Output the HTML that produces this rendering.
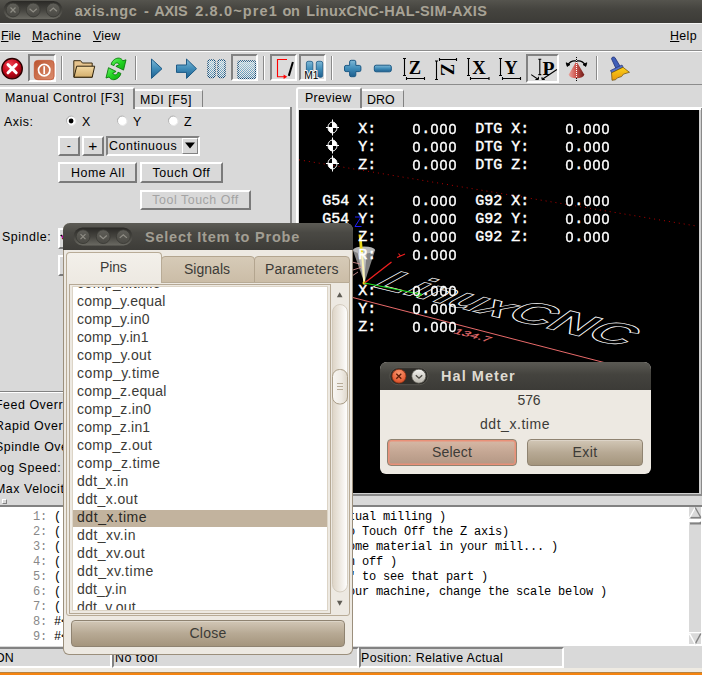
<!DOCTYPE html>
<html><head><meta charset="utf-8">
<style>
*{box-sizing:border-box;margin:0;padding:0}
html,body{width:702px;height:675px;overflow:hidden;background:#d9d9d9}
body{position:relative;font-family:"Liberation Sans",sans-serif;font-size:13.5px;color:#000}
.a{position:absolute;white-space:nowrap}
.t{position:absolute;white-space:nowrap;line-height:16px;height:16px}
u{text-decoration:underline;text-underline-offset:1px}
/* tk raised / sunken */
.rs{border:2px solid;border-color:#fff #828282 #828282 #fff;background:#d9d9d9}
.sk{border:2px solid;border-color:#828282 #fff #fff #828282}
.tkb{position:absolute;border:2px solid;border-color:#fff #7a7a7a #7a7a7a #fff;background:#d9d9d9;text-align:center;white-space:nowrap}
/* title bars */
.tb{position:absolute;background:linear-gradient(#504f4a,#3e3d39 60%,#3c3b37);}
.tbt{position:absolute;font-weight:bold;color:#bdb8ab;white-space:nowrap;font-size:14px}
#dro i{display:inline-block;width:9px;height:16px;text-align:center;font-style:normal;font-family:"Liberation Sans",sans-serif;font-size:15.500px;-webkit-text-stroke:.4px #fff;line-height:16px;vertical-align:top;transform:scaleX(.92)}
</style></head><body>

<!-- MAIN TITLE BAR -->
<div class="tb" id="mtb" style="left:0;top:0;width:702px;height:23px;background:linear-gradient(#55544e,#45443f 40%,#3c3b37)"></div>
<div class="a" style="left:0;top:23px;width:702px;height:1px;background:#f4f4f4"></div>
<svg class="a" style="left:0;top:0" width="70" height="23" viewBox="0 0 70 23">
<defs><linearGradient id="gPill" x1="0" y1="0" x2="0" y2="1"><stop offset="0" stop-color="#2a2926"/><stop offset="0.5" stop-color="#45443f"/><stop offset="1" stop-color="#6b6a63"/></linearGradient>
<linearGradient id="gBt" x1="0" y1="0" x2="0" y2="1"><stop offset="0" stop-color="#605f59"/><stop offset="1" stop-color="#4a4944"/></linearGradient></defs>
<rect x="3.500" y="1" width="59" height="18" rx="9" fill="url(#gPill)"/>
<g fill="url(#gBt)" stroke="#393834" stroke-width="0.800"><circle cx="13" cy="10" r="6.900"/><circle cx="33.200" cy="10" r="6.900"/><circle cx="53.300" cy="10" r="6.900"/></g>
<g stroke="#8f8d85" stroke-width="1.200" fill="none"><path d="M10.500 7.500l5 5M15.500 7.500l-5 5"/><path d="M29.600 8.800l3.600 3.200l3.600-3.200"/><path d="M49.700 11.200l3.600-3.200l3.600 3.200"/></g>
</svg>
<div class="tbt" id="mtt" style="left:75px;top:2px;height:18px;width:420px;line-height:18px;font-size:14.500px;color:#a8a396"><span class="a" style="left:-0.3px;top:0;letter-spacing:0.58px">axis.ngc</span><span class="a" style="left:69.0px;top:0;letter-spacing:0.00px">-</span><span class="a" style="left:79.2px;top:0;letter-spacing:-0.15px">AXIS</span><span class="a" style="left:120.2px;top:0;letter-spacing:1.14px">2.8.0~pre1</span><span class="a" style="left:207.6px;top:0;letter-spacing:-0.41px">on</span><span class="a" style="left:231.3px;top:0;letter-spacing:0.33px">LinuxCNC-HAL-SIM-AXIS</span></div>

<!-- MENU -->
<div class="t" style="left:1px;top:28px;font-size:12.400px;letter-spacing:-.1px"><u>F</u>ile</div>
<div class="t" style="left:32px;top:28px;font-size:12.400px;letter-spacing:.38px"><u>M</u>achine</div>
<div class="t" style="left:93px;top:28px;font-size:12.400px;letter-spacing:.19px"><u>V</u>iew</div>
<div class="t" style="left:670px;top:28px;font-size:12.400px;letter-spacing:.37px"><u>H</u>elp</div>

<!-- TOOLBAR -->
<div class="a" style="left:0;top:50px;width:702px;height:1px;background:#8c8c8c"></div>
<div class="a" style="left:0;top:51px;width:702px;height:1px;background:#fff"></div>
<div class="a" style="left:0;top:84px;width:702px;height:1px;background:#8c8c8c"></div>

<div id="toolbar"><svg class="a" style="left:0;top:0" width="702" height="90" viewBox="0 0 702 90">
<defs>
<radialGradient id="gRed" cx="0.4" cy="0.3" r="0.75"><stop offset="0" stop-color="#f04050"/><stop offset="0.55" stop-color="#c80a1c"/><stop offset="1" stop-color="#7a0008"/></radialGradient>
<linearGradient id="gBlue" x1="0" y1="0" x2="0" y2="1"><stop offset="0" stop-color="#7fb8d6"/><stop offset="0.5" stop-color="#3f8cb8"/><stop offset="1" stop-color="#1f5f8e"/></linearGradient>
<linearGradient id="gGrn" x1="0" y1="0" x2="1" y2="1"><stop offset="0" stop-color="#6cf56c"/><stop offset="0.5" stop-color="#22d422"/><stop offset="1" stop-color="#0fa80f"/></linearGradient>
<linearGradient id="gFold" x1="0" y1="0" x2="0" y2="1"><stop offset="0" stop-color="#f3d9a4"/><stop offset="1" stop-color="#d3ae6c"/></linearGradient>
<linearGradient id="gPow" x1="0" y1="0" x2="1" y2="1"><stop offset="0" stop-color="#b9532f"/><stop offset="0.5" stop-color="#cd7350"/><stop offset="1" stop-color="#d98e70"/></linearGradient>
<linearGradient id="gCone" x1="0" y1="0" x2="1" y2="0"><stop offset="0" stop-color="#e8a09a"/><stop offset="0.45" stop-color="#d0564e"/><stop offset="1" stop-color="#6e1c18"/></linearGradient>
<linearGradient id="gYel" x1="0" y1="0" x2="0" y2="1"><stop offset="0" stop-color="#fbd21a"/><stop offset="1" stop-color="#e8960a"/></linearGradient>
<linearGradient id="gLB" x1="0" y1="0" x2="0" y2="1"><stop offset="0" stop-color="#a6d0e2"/><stop offset="1" stop-color="#4a89b0"/></linearGradient>
</defs>
<!-- sunken buttons -->
<g id="sunk">
<g><rect x="28" y="54" width="28" height="28" fill="#dbdbdb"/><path d="M28 54H56L54 56H30V80L28 82z" fill="#828282"/><path d="M56 54V82H28L30 80H54V56z" fill="#fff"/></g>
<g><rect x="231" y="54" width="27" height="27" fill="#dbdbdb"/><path d="M231 54H258L256 56H233V79L231 81z" fill="#828282"/><path d="M258 54V81H231L233 79H256V56z" fill="#fff"/></g>
<g><rect x="270" y="54" width="27" height="27" fill="#dbdbdb"/><path d="M270 54H297L295 56H272V79L270 81z" fill="#828282"/><path d="M297 54V81H270L272 79H295V56z" fill="#fff"/></g>
<g><rect x="299" y="54" width="27" height="27" fill="#dbdbdb"/><path d="M299 54H326L324 56H301V79L299 81z" fill="#828282"/><path d="M326 54V81H299L301 79H324V56z" fill="#fff"/></g>
<g><rect x="526" y="54" width="33" height="29" fill="#dbdbdb"/><path d="M526 54H559L557 56H528V81L526 83z" fill="#828282"/><path d="M559 54V83H526L528 81H557V56z" fill="#fff"/></g>
</g>
<!-- separators -->
<g id="seps" stroke-width="1">
<path d="M61.5 56V80M135.500 56V80M263.500 56V80M331.500 56V80M596.500 56V80" stroke="#8a8a8a"/>
<path d="M62.5 56V80M136.500 56V80M264.500 56V80M332.500 56V80M597.500 56V80" stroke="#fff"/>
</g>
<!-- estop -->
<circle cx="12.100" cy="68.700" r="10.200" fill="url(#gRed)" stroke="#2a0000" stroke-width="1.300"/>
<path d="M8 64.600L16.200 72.800M16.200 64.600L8 72.800" stroke="#fff" stroke-width="3" stroke-linecap="round"/>
<!-- power -->
<rect x="34.300" y="60.400" width="19.800" height="19.300" rx="3.500" fill="url(#gPow)" stroke="#c4532e" stroke-width="0.800"/>
<circle cx="44.200" cy="70.100" r="5.700" fill="none" stroke="#fff" stroke-width="1.700"/>
<path d="M44.200 66.200V74" stroke="#fff" stroke-width="1.700"/>
<!-- folder -->
<path d="M73.800 60.700h6.800l1.800 2.300h9.800v14.200h-18.400z" fill="#e6c48e" stroke="#3a2c12" stroke-width="1" stroke-linejoin="round"/>
<path d="M76.700 66.200h18l-2.500 11h-18.200z" fill="url(#gFold)" stroke="#2e220c" stroke-width="1" stroke-linejoin="round"/>
<!-- reload -->
<g fill="url(#gGrn)" stroke="#0a7a0a" stroke-width="0.900" stroke-linejoin="round">
<path d="M111.100 64.400C112 60.500 116 57.500 119.500 58.200C121 58.500 122.200 59.500 122.900 60.800L126 59.800L123.500 70.100L115.900 66.300L119.300 64.700C118.600 63.200 117.300 62.700 116.200 63C115.200 63.300 114.400 64.300 114 65.600z"/>
<path d="M120.900 73.400 C120.000 77.300 116.000 80.300 112.500 79.600 C111.000 79.300 109.800 78.300 109.100 77.000 L106.000 78.000 L108.500 67.700 L116.100 71.500 L112.700 73.100 C113.400 74.600 114.700 75.100 115.800 74.800 C116.800 74.500 117.600 73.500 118.000 72.200 z"/>
</g>
<!-- play -->
<path d="M151.500 59l10.500 9.700l-10.500 9.700z" fill="url(#gBlue)" stroke="#1c5a86" stroke-width="1" stroke-linejoin="round"/>
<!-- step arrow -->
<path d="M176.500 65h10v-6l10 9.700l-10 9.700v-6h-10z" fill="url(#gBlue)" stroke="#1c5a86" stroke-width="1" stroke-linejoin="round"/>
<!-- pause -->
<pattern id="chk" width="2" height="2" patternUnits="userSpaceOnUse"><rect width="1" height="1" fill="#fff"/><rect x="1" y="1" width="1" height="1" fill="#fff"/></pattern>
<mask id="mchk" maskUnits="userSpaceOnUse" x="200" y="50" width="70" height="40"><rect x="200" y="50" width="70" height="40" fill="url(#chk)"/></mask>
<g fill="#efe9e6"><rect x="208" y="60" width="7" height="17.500" rx="2.200"/><rect x="218" y="60" width="7" height="17.500" rx="2.200"/><rect x="238" y="61" width="17.500" height="17.500" rx="2.800"/></g>
<g mask="url(#mchk)">
<rect x="208" y="60" width="7" height="17.500" rx="2.200" fill="url(#gLB)" stroke="#0d4a78" stroke-width="1.400"/>
<rect x="218" y="60" width="7" height="17.500" rx="2.200" fill="url(#gLB)" stroke="#0d4a78" stroke-width="1.400"/>
<!-- stop -->
<rect x="238" y="61" width="17.500" height="17.500" rx="2" fill="url(#gLB)" stroke="#0d4a78" stroke-width="1.400"/>
</g>
<!-- skip -->
<path d="M287 59.500H277.500V76.700H285" fill="none" stroke="#f00" stroke-width="1.100"/>
<path d="M283.600 74.400l3.600 2.300l-3.600 2.300z" fill="#f00"/>
<path d="M292.900 62L288.800 75.900" stroke="#000" stroke-width="2"/>
<!-- M1 -->
<rect x="306.400" y="61.300" width="6.400" height="16" rx="1.800" fill="url(#gBlue)" stroke="#1c5a86" stroke-width="0.800"/>
<rect x="316.300" y="61.300" width="6.400" height="16" rx="1.800" fill="url(#gBlue)" stroke="#1c5a86" stroke-width="0.800"/>
<text x="304.300" y="78.900" font-family="Liberation Sans" font-size="10.200" fill="#000" stroke="#f4f4f4" stroke-width="2.200" paint-order="stroke" stroke-linejoin="round">M1</text>
<!-- plus / minus -->
<path d="M351.200 60.300H354.200Q355.800 60.300 355.800 61.900V65.400H359.300Q360.900 65.400 360.900 67.000V70.000Q360.900 71.600 359.300 71.600H355.800V75.100Q355.800 76.700 354.200 76.700H351.200Q349.600 76.700 349.600 75.100V71.600H346.100Q344.500 71.600 344.500 70.000V67.000Q344.500 65.400 346.100 65.400H349.600V61.900Q349.600 60.300 351.200 60.300Z" fill="url(#gBlue)" stroke="#1c5a86" stroke-width="1"/>
<rect x="374.300" y="65.200" width="17" height="6.600" rx="1.800" fill="url(#gBlue)" stroke="#1c5a86" stroke-width="1"/>
<!-- view icons -->
<g stroke="#000" stroke-width="1.100" fill="none">
<path d="M404.500 58.500V75.500M403 58.500h3M403 75.500h3"/><path d="M406.500 78.500H424.500M406.500 77v3M424.500 77v3"/>
<path d="M436.500 61V79.500M435 61h3M435 79.500h3"/><path d="M439.500 59.500H456.500M439.500 58v3M456.500 58v3"/>
<path d="M468.500 58.500V75.500M467 58.500h3M467 75.500h3"/><path d="M470.500 78.500H489M470.500 77v3M489 77v3"/>
<path d="M500.500 58.500V75.500M499 58.500h3M499 75.500h3"/><path d="M502.500 78.500H520.500M502.500 77v3M520.500 77v3"/>
<path d="M539.800 59.300V74.600M538.300 59.300h3M538.300 74.600h3"/>
<path d="M531.200 74.600L538.400 79.500M538.400 79.500v-2.800M538.400 79.500h-3"/><path d="M542 79.500L556.900 69.500M542 79.500v-2.200M542 79.500h2.800"/>
</g>
<g font-family="Liberation Serif" font-weight="bold" font-size="18.500" fill="#000">
<text x="408.800" y="74">Z</text>
<text transform="translate(441.200,63.400) rotate(90)" x="0" y="0" font-size="18.500">Z</text>
<text x="472.300" y="74">X</text>
<text x="504.300" y="74">Y</text>
<text x="542.600" y="74.600" font-size="19.700">P</text>
</g>
<!-- cone -->
<path d="M576.400 61.300L584.200 74.600a7.600 3.600 0 0 1-15.400 0z" fill="url(#gCone)"/>
<path d="M567.600 65q3.500-5 8.300-4M585.400 65q-3.500-5-8.300-4" fill="none" stroke="#000" stroke-width="1.300"/>
<path d="M566.200 62.800l1 3.600l2.800-1.800zM586.800 62.800l-1 3.600l-2.800-1.800z" fill="#000" stroke="#000" stroke-width="0.900"/>
<path d="M576.500 57V62M576.500 78V81" stroke="#000" stroke-width="1" stroke-dasharray="1 1"/>
<path d="M576.500 62V78" stroke="#fff" stroke-width="1" stroke-dasharray="1 1"/>
<!-- brush -->
<path d="M611.500 58.800a2 2 0 0 1 3.600-1l5.600 9.500l-4.300 2.200z" fill="#3f5fb8" stroke="#23327a" stroke-width="0.800"/>
<path d="M610.500 70.500l11.500-5.500l1.200 2.300l-11.500 5.600z" fill="#5674c8" stroke="#23327a" stroke-width="0.700"/>
<path d="M611.500 72.800l11.500-5.500l6.500 5l-6 1.800l-2 2.500l-4 1.200l-2 2l-3.500 0.500z" fill="url(#gYel)" stroke="#6a4a08" stroke-width="0.700"/>
</svg>
</div>

<!-- LEFT PANEL -->
<div id="left"><style>
.tk{font-size:12.4px;letter-spacing:.55px}
</style>
<div class="tk">
<!-- notebook tabs left -->
<div class="a" style="left:135px;top:107px;width:157px;height:2px;background:#fff"></div>
<div class="a" style="left:290px;top:107px;width:2px;height:290px;background:#828282"></div>
<div class="a" style="left:135px;top:89px;width:68px;height:18px;border-top:2px solid #fff;border-right:1px solid #828282;border-radius:0 3px 0 0"></div>
<div class="a" style="left:0;top:87px;width:135px;height:22px;border-top:2px solid #fff;border-right:2px solid #828282;border-radius:0 3px 0 0;background:#d9d9d9"></div>
<div class="t" style="left:5px;top:90px">Manual Control [F3]</div>
<div class="t" style="left:140px;top:92px">MDI [F5]</div>
<div class="t" style="left:4px;top:114px">Axis:</div>
<!-- radios -->
<svg class="a" style="left:0;top:100px" width="300" height="40" viewBox="0 100 300 40">
<g id="radios">
<defs><linearGradient id="gRad" x1="0" y1="0" x2="1" y2="1"><stop offset="0" stop-color="#8e8e8e"/><stop offset="0.5" stop-color="#d0d0d0"/><stop offset="1" stop-color="#ffffff"/></linearGradient></defs>
<circle cx="71.200" cy="120.800" r="4.700" fill="#fff" stroke="url(#gRad)" stroke-width="1"/><circle cx="71.100" cy="121" r="2.400" fill="#000"/>
<circle cx="122.200" cy="120.800" r="4.700" fill="#fff" stroke="url(#gRad)" stroke-width="1"/>
<circle cx="173.200" cy="120.800" r="4.700" fill="#fff" stroke="url(#gRad)" stroke-width="1"/>
</g></svg>
<div class="t" style="left:82px;top:114px">X</div>
<div class="t" style="left:133px;top:114px">Y</div>
<div class="t" style="left:184px;top:114px">Z</div>
<div class="tkb" style="left:58px;top:136px;width:22px;height:20px;line-height:17px">-</div>
<div class="tkb" style="left:82px;top:136px;width:22px;height:20px;line-height:16px;font-size:15.500px">+</div>
<div class="a" style="left:106px;top:136px;width:94px;height:20px;border:2px solid;border-color:#828282 #fff #fff #828282"></div>
<div class="t" style="left:109px;top:138px">Continuous</div>
<div class="a" style="left:182px;top:138px;width:16px;height:16px;border:1px solid;border-color:#fff #828282 #828282 #fff"></div>
<svg class="a" style="left:185px;top:142px" width="10" height="7"><path d="M0 0.500h10l-5 6z" fill="#000"/></svg>
<div class="tkb" style="left:58px;top:162px;width:79px;height:21px;line-height:16px;padding-top:1px;padding-left:1px">Home All</div>
<div class="tkb" style="left:140px;top:162px;width:83px;height:21px;line-height:16px;padding-top:1px">Touch Off</div>
<div class="tkb" style="left:140px;top:190px;width:111px;height:20px;line-height:15px;padding-top:1px;color:#a3a3a3">Tool Touch Off</div>
<div class="t" style="left:2px;top:229px">Spindle:</div>
<div class="tkb" style="left:58px;top:228px;width:21px;height:21px"></div>
<div class="tkb" style="left:58px;top:255px;width:21px;height:21px"></div>
<svg class="a" style="left:58px;top:230px" width="8" height="14"><path d="M2 5.500l2.500 1.500l-0.500-2.500z" fill="#000"/><path d="M3 6.500l2 2.500v-4z" fill="#b0109a"/><path d="M3.500 8.500l1.500 1v-1.500z" fill="#7a0010"/></svg>
<!-- lower sliders area -->
<div class="a" style="left:0;top:391px;width:292px;height:1px;background:#828282"></div>
<div class="a" style="left:0;top:392px;width:292px;height:1px;background:#fff"></div>
<div class="t" style="left:-5px;top:397px">Feed Override:</div>
<div class="t" style="left:-5px;top:418px">Rapid Override:</div>
<div class="t" style="left:-5px;top:439px">Spindle Override:</div>
<div class="t" style="left:-7px;top:460px">Jog Speed:</div>
<div class="t" style="left:-5px;top:481px">Max Velocity:</div>
</div>
</div>

<!-- PREVIEW -->
<div id="preview"><div class="tk">
<!-- right notebook tabs -->
<div class="a" style="left:362px;top:107px;width:340px;height:3px;background:#fff"></div>
<div class="a" style="left:298px;top:108px;width:64px;height:2px;background:#e9e9e9"></div>
<div class="a" style="left:296px;top:89px;width:2px;height:407px;background:#fff"></div>
<div class="a" style="left:362px;top:89px;width:42px;height:18px;border-top:2px solid #fff;border-right:1px solid #828282;border-radius:0 3px 0 0"></div>
<div class="a" style="left:296px;top:87px;width:66px;height:21px;border-top:2px solid #fff;border-left:2px solid #fff;border-right:2px solid #828282;border-radius:3px 3px 0 0;background:#d9d9d9"></div>
<div class="t" style="left:305px;top:90px;letter-spacing:.35px">Preview</div>
<div class="t" style="left:367px;top:92px;letter-spacing:0">DRO</div>
</div>
<div class="a" style="left:298px;top:493px;width:403px;height:1px;background:#d0d0d0"></div>
<div class="a" style="left:296px;top:494px;width:406px;height:2px;background:#8a8a8a"></div>
<div class="a" style="left:699px;top:110px;width:2px;height:384px;background:#d0d0d0"></div>
<div class="a" style="left:701px;top:108px;width:1px;height:388px;background:#8a8a8a"></div>
<div class="a" style="left:299px;top:110px;width:400px;height:383px;background:#000;overflow:hidden">
<svg class="a" style="left:-299px;top:-110px" width="702" height="675" viewBox="0 0 702 675">
<!-- dotted red line -->
<path d="M299 159.800L698 226.300" stroke="#b00000" stroke-width="1" stroke-dasharray="1 4"/>
<!-- big red line -->
<path d="M352 297.300L640 371.800" stroke="#e86a6a" stroke-width="1"/>
<!-- LinuxCNC outline -->
<g fill="none" stroke="#fff" font-family="Liberation Sans" font-size="30" font-weight="bold">
<text transform="matrix(1.62,0.4,-1.35,0.74,370,286)" stroke-width="1" vector-effect="non-scaling-stroke">Linux</text>
<text transform="matrix(1.84,0.453,-1.16,0.85,503,317.500)" stroke-width="1" vector-effect="non-scaling-stroke">CNC</text>
</g>
<!-- cone tool -->
<path d="M353 250.500a11 3.500 0 0 1 22 0L364.400 283z" fill="#9a9a9a" fill-opacity="0.850"/>
<path d="M357 250L364 282L367 250z" fill="#d8d8d8" fill-opacity="0.700"/>
<ellipse cx="364" cy="250" rx="11" ry="3.500" fill="#b8b8b8"/>
<path d="M360 234.500L361.500 252" stroke="#e8d418" stroke-width="2.800"/>
<path d="M362 252L364.300 283" stroke="#fbf4b8" stroke-width="2"/>
<circle cx="364.300" cy="283" r="1.800" fill="#f2d21a"/>
<!-- axes -->
<path d="M364.500 283L391.500 262" stroke="#f02020" stroke-width="1.300"/>
<path d="M397 257.500l8-3.500M400.500 256l-2-2.500" stroke="#f02020" stroke-width="1.100"/>
<path d="M364.500 283L422 294.500" stroke="#20e020" stroke-width="1.200"/>
<path d="M416 297l6-2.500l-4.500-2" stroke="#20e020" stroke-width="1" fill="none"/>
<path d="M355 217h6l-6 9.500h6.500" stroke="#2020ff" stroke-width="1" fill="none"/>
<!-- faint pink hatch left of cone -->
<path d="M352 262l8 2M353 270l9 -3M352 276l6 -4" stroke="#e9a0a0" stroke-width="0.800"/>
<!-- 134.7 label -->
<text transform="matrix(1.07,0.27,-0.52,0.5,452.500,333)" font-family="Liberation Sans" font-size="13" fill="#e87070" stroke="#e87070" stroke-width="0.300" letter-spacing="0.300">134.7</text>
<!-- home symbols -->
<g id="homes" stroke="#fff" fill="none" stroke-width="1">
<g transform="translate(332.500,127.500)"><path d="M0 0V-5.500A4.500 5.500 0 0 1 4.500 0zM0 0V5.500A4.500 5.500 0 0 1 -4.500 0z" fill="#fff" stroke="none"/><ellipse rx="4.500" ry="5.500"/><path d="M-6.500 0H6.500M0-8V8"/></g>
<g transform="translate(332.500,145.500)"><path d="M0 0V-5.500A4.500 5.500 0 0 1 4.500 0zM0 0V5.500A4.500 5.500 0 0 1 -4.500 0z" fill="#fff" stroke="none"/><ellipse rx="4.500" ry="5.500"/><path d="M-6.500 0H6.500M0-8V8"/></g>
<g transform="translate(332.500,163.500)"><path d="M0 0V-5.500A4.500 5.500 0 0 1 4.500 0zM0 0V5.500A4.500 5.500 0 0 1 -4.500 0z" fill="#fff" stroke="none"/><ellipse rx="4.500" ry="5.500"/><path d="M-6.500 0H6.500M0-8V8"/></g>
</g>
</svg>
<pre class="a" id="dro" style="white-space:pre;left:23.300px;top:11px;font-family:'Liberation Mono',monospace;font-weight:normal;-webkit-text-stroke:.45px #fff;font-size:15px;line-height:18px;color:#fff;letter-spacing:0">    X:    <i>0</i>.<i>0</i><i>0</i><i>0</i>  DTG X:    <i>0</i>.<i>0</i><i>0</i><i>0</i>
    Y:    <i>0</i>.<i>0</i><i>0</i><i>0</i>  DTG Y:    <i>0</i>.<i>0</i><i>0</i><i>0</i>
    Z:    <i>0</i>.<i>0</i><i>0</i><i>0</i>  DTG Z:    <i>0</i>.<i>0</i><i>0</i><i>0</i>

G54 X:    <i>0</i>.<i>0</i><i>0</i><i>0</i>  G92 X:    <i>0</i>.<i>0</i><i>0</i><i>0</i>
G54 Y:    <i>0</i>.<i>0</i><i>0</i><i>0</i>  G92 Y:    <i>0</i>.<i>0</i><i>0</i><i>0</i>
G54 Z:    <i>0</i>.<i>0</i><i>0</i><i>0</i>  G92 Z:    <i>0</i>.<i>0</i><i>0</i><i>0</i>
    R:    <i>0</i>.<i>0</i><i>0</i><i>0</i>

    X:    <i>0</i>.<i>0</i><i>0</i><i>0</i>
    Y:    <i>0</i>.<i>0</i><i>0</i><i>0</i>
    Z:    <i>0</i>.<i>0</i><i>0</i><i>0</i></pre>
</div>
</div>

<!-- GCODE TEXT -->
<div id="gcode"><div class="a" style="left:0;top:505px;width:702px;height:2px;background:#828282"></div>
<div class="a" style="left:0;top:507px;width:689px;height:139px;background:#fff"></div>
<div class="a" style="left:689px;top:507px;width:13px;height:139px;background:#d9d9d9;border-right:1px solid #fff;border-bottom:2px solid #fff"></div>
<svg class="a" style="left:689px;top:507px" width="13" height="139">
<path d="M6.200 0.500L11.800 11H0.500z" fill="#d9d9d9"/><path d="M6.200 0.500L0.500 11" stroke="#fff" stroke-width="1.300"/><path d="M6.200 0.500L11.800 10.500" stroke="#828282" stroke-width="1.300" fill="none"/><path d="M1.500 10.700H12" stroke="#828282" stroke-width="1.600"/>
<rect x="0" y="12" width="12" height="3" fill="#fff"/>
<path d="M1 16.500H12" stroke="#828282" stroke-width="2"/><path d="M9.500 16.500L12 14.300V16.500z" fill="#828282"/>
<rect x="0" y="125" width="12" height="1.500" fill="#fff"/>
<path d="M0.500 126.500H11.800L6.200 137z" fill="#d9d9d9"/><path d="M11.800 126.500L6.200 137" stroke="#828282" stroke-width="1.500"/><path d="M6.200 137L0.500 126.500" stroke="#fff" stroke-width="1.500" fill="none"/>
</svg>
<div class="a" style="left:2px;top:499px;width:5px;height:5px;border:1px solid;border-color:#fff #828282 #828282 #fff"></div>
<pre class="a" style="white-space:pre;left:5px;top:510px;font-family:'Liberation Mono',monospace;font-size:12px;letter-spacing:-.2px;line-height:15px;color:#000"><span style="color:#888">    1: </span>( AXIS "splash g-code" Not intended for actual milling )
<span style="color:#888">    2: </span>( To run this code anyway you might have to Touch Off the Z axis)
<span style="color:#888">    3: </span>( depending on your setup. As if you had some material in your mill... )
<span style="color:#888">    4: </span>( Hint jog the Z axis down a bit then touch off )
<span style="color:#888">    5: </span>( Also press the Toggle Skip Lines with "/" to see that part )
<span style="color:#888">    6: </span>( If the program is too big or small for your machine, change the scale below )
<span style="color:#888">    7: </span>( LinuxCNC 19/1/2012 2:13:51 PM )
<span style="color:#888">    8: </span>#&lt;depth&gt;=2.0
<span style="color:#888">    9: </span>#&lt;scale&gt;=1.0</pre>
</div>

<!-- STATUS BAR -->
<div id="status"><div class="tk">
<div class="a" style="left:-3px;top:647px;width:115px;height:21px;border:2px solid;border-color:#828282 #fff #fff #828282"></div>
<div class="a" style="left:112px;top:647px;width:247px;height:21px;border:2px solid;border-color:#828282 #fff #fff #828282"></div>
<div class="a" style="left:359px;top:647px;width:205px;height:21px;border:2px solid;border-color:#828282 #fff #fff #828282"></div>
<div class="a" style="left:0;top:668px;width:702px;height:4px;background:#eeeae2"></div>
<div class="a" style="left:0;top:672px;width:702px;height:1px;background:#b8823e"></div>
<div class="t" style="left:-5px;top:650px;letter-spacing:.2px">ON</div>
<div class="t" style="left:115px;top:650px;letter-spacing:.53px">No tool</div>
<div class="t" style="left:361px;top:650px;letter-spacing:.37px">Position: Relative Actual</div>
<div class="a" style="left:0;top:673px;width:702px;height:2px;background:#f58410"></div>
</div>
</div>

<!-- DIALOG: SELECT ITEM -->
<div id="dlg1">
<style>
.gtk{font-size:14px;color:#3c3b37;letter-spacing:.3px}
.li{position:absolute;left:0;width:254px;height:18px;line-height:16px;padding-left:4px;white-space:nowrap}
.li.sel{background:#c2b39e;color:#2a2925;margin-top:1px;height:17px;line-height:14px}
.gbtn{position:absolute;border:1px solid #8f8371;border-radius:4px;background:linear-gradient(#d2c7b6,#b7a994 50%,#a4957d);text-align:center;box-shadow:inset 0 1px 0 rgba(255,255,255,.25)}
</style>
<div class="gtk">
<!-- window frame -->
<div class="a" style="left:63px;top:223px;width:290px;height:432px;border-radius:7px 7px 6px 6px;background:#ede9e2;border:1px solid #9b8f7c;border-top:none"></div>
<div class="tb" style="left:63px;top:223px;width:290px;height:27px;border-radius:7px 7px 0 0;background:linear-gradient(#5d5c56,#4a4944 35%,#3d3c38)"></div>
<svg class="a" style="left:63px;top:223px" width="120" height="27" viewBox="63 223 120 27">
<rect x="73.500" y="227.500" width="59" height="18" rx="9" fill="url(#gPill)"/>
<g fill="url(#gBt)" stroke="#393834" stroke-width="0.800"><circle cx="83" cy="236.700" r="6.900"/><circle cx="103.200" cy="236.700" r="6.900"/><circle cx="123.300" cy="236.700" r="6.900"/></g>
<g stroke="#8f8d85" stroke-width="1.200" fill="none"><path d="M80.500 234.200l5 5M85.500 234.200l-5 5"/><path d="M99.600 235.500l3.600 3.200l3.600-3.200"/><path d="M119.700 237.900l3.600-3.200l3.600 3.200"/></g>
</svg>
<div class="tbt" style="left:145px;top:228px;line-height:18px;font-size:14.500px;letter-spacing:.78px;color:#a29e93">Select Item to Probe</div>
<!-- notebook tabs -->
<div class="a" style="left:161px;top:256px;width:94px;height:27px;border:1px solid #b3a58f;border-radius:4px 4px 0 0;background:linear-gradient(#d6cab7,#cbbda7)"></div>
<div class="a" style="left:254px;top:256px;width:96px;height:27px;border:1px solid #b3a58f;border-radius:4px 4px 0 0;background:linear-gradient(#d6cab7,#cbbda7)"></div>
<div class="a" style="left:66px;top:282px;width:284px;height:334px;border:1px solid #b8ab96;border-radius:0 0 3px 3px;background:#ede9e2"></div>
<div class="a" style="left:66px;top:252px;width:96px;height:31px;border:1px solid #b8ab96;border-bottom:none;border-radius:4px 4px 0 0;background:linear-gradient(#f3f0ea,#ede9e2)"></div>
<div class="t" style="left:100px;top:259px;letter-spacing:-.15px">Pins</div>
<div class="t" style="left:184px;top:261px;letter-spacing:.02px">Signals</div>
<div class="t" style="left:265px;top:261px;letter-spacing:.12px">Parameters</div>
<!-- list -->
<div class="a" style="left:69px;top:284px;width:262px;height:330px;border:1px solid #b5a894;background:#ede9e2"></div>
<div class="a" style="left:72px;top:286px;width:256px;height:325px;border:1px solid #dcd4c6;background:#fff"></div>
<div class="a" style="left:73px;top:287px;width:254px;height:323px;background:#fff;overflow:hidden">
<div class="li" style="top:-12px;letter-spacing:0.42px">comp_x.time</div>
<div class="li" style="top:6px;letter-spacing:0.21px">comp_y.equal</div>
<div class="li" style="top:24px;letter-spacing:0.21px">comp_y.in0</div>
<div class="li" style="top:42px;letter-spacing:0.11px">comp_y.in1</div>
<div class="li" style="top:60px;letter-spacing:0.30px">comp_y.out</div>
<div class="li" style="top:78px;letter-spacing:0.43px">comp_y.time</div>
<div class="li" style="top:96px;letter-spacing:0.21px">comp_z.equal</div>
<div class="li" style="top:114px;letter-spacing:0.27px">comp_z.in0</div>
<div class="li" style="top:132px;letter-spacing:0.17px">comp_z.in1</div>
<div class="li" style="top:150px;letter-spacing:0.29px">comp_z.out</div>
<div class="li" style="top:168px;letter-spacing:0.38px">comp_z.time</div>
<div class="li" style="top:186px;letter-spacing:0.33px">ddt_x.in</div>
<div class="li" style="top:204px;letter-spacing:0.38px">ddt_x.out</div>
<div class="li sel" style="top:222px;letter-spacing:0.56px">ddt_x.time</div>
<div class="li" style="top:240px;letter-spacing:0.43px">ddt_xv.in</div>
<div class="li" style="top:258px;letter-spacing:0.45px">ddt_xv.out</div>
<div class="li" style="top:276px;letter-spacing:0.57px">ddt_xv.time</div>
<div class="li" style="top:294px;letter-spacing:0.21px">ddt_y.in</div>
<div class="li" style="top:312px;letter-spacing:0.26px">ddt_y.out</div>
</div>
<!-- scrollbar -->
<svg class="a" style="left:331px;top:284px" width="18" height="330" viewBox="331 284 18 330">
<defs><linearGradient id="gTr" x1="0" y1="0" x2="1" y2="0"><stop offset="0" stop-color="#ddd4c6"/><stop offset="0.45" stop-color="#ece7df"/><stop offset="1" stop-color="#ffffff"/></linearGradient>
<linearGradient id="gTh" x1="0" y1="0" x2="1" y2="0"><stop offset="0" stop-color="#f8f6f2"/><stop offset="0.6" stop-color="#eeeae3"/><stop offset="1" stop-color="#ddd6ca"/></linearGradient></defs>
<path d="M336.900 297.300h5.600l-2.800-5z" fill="#5e5b54"/>
<path d="M336.900 600.700h5.600l-2.800 5z" fill="#5e5b54"/>
<rect x="332.500" y="304.500" width="15" height="287.500" rx="7.500" fill="url(#gTr)" stroke="#cdc4b5" stroke-width="0.800"/>
<rect x="332.500" y="369.500" width="15" height="34.500" rx="7" fill="url(#gTh)" stroke="#a89b85" stroke-width="1"/>
<path d="M337 383.500h6M337 386.500h6M337 389.500h6" stroke="#b7ab97" stroke-width="1"/>
</svg>
<!-- close button -->
<div class="gbtn" style="left:71px;top:620px;width:274px;height:27px;line-height:24px;letter-spacing:.25px">Close</div>
</div>
</div><!--e1-->

<!-- DIALOG: HAL METER -->
<div id="dlg2">
<div class="gtk">
<div class="a" style="left:380px;top:362px;width:271px;height:111.500px;border-radius:7px 7px 6px 6px;background:#ede9e2"></div>
<div class="tb" style="left:380px;top:362px;width:271px;height:27.500px;border-radius:7px 7px 0 0;background:linear-gradient(#5b5a54,#44433e 45%,#3c3b37)"></div>
<svg class="a" style="left:380px;top:363px" width="80" height="27" viewBox="380 363 80 27">
<defs><radialGradient id="gOr" cx="0.5" cy="0.3" r="0.8"><stop offset="0" stop-color="#f79a72"/><stop offset="0.6" stop-color="#e9643c"/><stop offset="1" stop-color="#c3461f"/></radialGradient>
<linearGradient id="gGy" x1="0" y1="0" x2="0" y2="1"><stop offset="0" stop-color="#f4f3f0"/><stop offset="1" stop-color="#b9b6ad"/></linearGradient></defs>
<rect x="389.800" y="367.700" width="38.200" height="17" rx="8.500" fill="#2f2e2a" stroke="#5d5c56" stroke-width="0.800"/>
<circle cx="399" cy="376.200" r="7" fill="url(#gOr)" stroke="#7a2a10" stroke-width="0.700"/>
<circle cx="418.800" cy="376.200" r="7" fill="url(#gGy)" stroke="#55534c" stroke-width="0.700"/>
<path d="M396.300 373.700l5 5M401.300 373.700l-5 5" stroke="#5e1d08" stroke-width="1.300"/>
<path d="M415.800 375.200l3.200 3l3.200-3" stroke="#4a4842" stroke-width="1.300" fill="none"/>
</svg>
<div class="tbt" style="left:441px;top:367px;line-height:18px;font-size:14.500px;letter-spacing:1.050px;color:#dfdbd2">Hal Meter</div>
<div class="t" style="left:517.500px;top:392px;letter-spacing:-.1px">576</div>
<div class="t" style="left:480px;top:416px;letter-spacing:.54px">ddt_x.time</div>
<div class="gbtn" style="left:387px;top:439px;width:130px;height:27px;line-height:24px;background:linear-gradient(#d7b9a6,#c4a693 50%,#b39784);box-shadow:inset 0 0 0 1.500px #ea9078;letter-spacing:.2px">Select</div>
<div class="gbtn" style="left:527px;top:439px;width:116px;height:27px;line-height:24px;letter-spacing:.4px">Exit</div>
</div>
</div><!--e2-->

</body></html>
